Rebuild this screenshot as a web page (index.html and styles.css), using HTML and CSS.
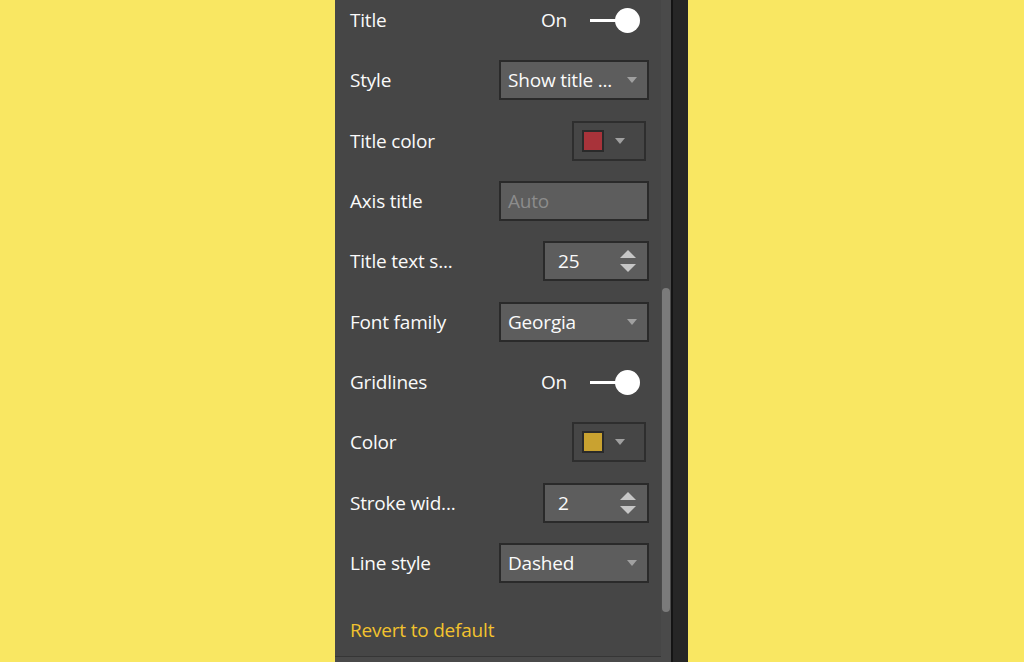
FILE: index.html
```html
<!DOCTYPE html>
<html>
<head>
<meta charset="utf-8">
<link rel="stylesheet" href="styles.css">
</head>
<body>
<div class="panel">
  <div class="content">
    <div class="rows">
      <div class="row">
        <span class="label">Title</span>
        <div class="toggle"><span class="state">On</span><span class="switch"><span class="knob"></span></span></div>
      </div>
      <div class="row">
        <span class="label">Style</span>
        <div class="select"><span class="value">Show title ...</span><span class="caret"></span></div>
      </div>
      <div class="row">
        <span class="label">Title color</span>
        <div class="color"><span class="swatch swatch-red"></span><span class="caret"></span></div>
      </div>
      <div class="row">
        <span class="label">Axis title</span>
        <div class="input"><span class="placeholder">Auto</span></div>
      </div>
      <div class="row">
        <span class="label">Title text s...</span>
        <div class="spin"><span class="value">25</span><span class="arrows"><span class="up"></span><span class="down"></span></span></div>
      </div>
      <div class="row">
        <span class="label">Font family</span>
        <div class="select"><span class="value">Georgia</span><span class="caret"></span></div>
      </div>
      <div class="row">
        <span class="label">Gridlines</span>
        <div class="toggle"><span class="state">On</span><span class="switch"><span class="knob"></span></span></div>
      </div>
      <div class="row">
        <span class="label">Color</span>
        <div class="color"><span class="swatch swatch-gold"></span><span class="caret"></span></div>
      </div>
      <div class="row">
        <span class="label">Stroke wid...</span>
        <div class="spin"><span class="value">2</span><span class="arrows"><span class="up"></span><span class="down"></span></span></div>
      </div>
      <div class="row">
        <span class="label">Line style</span>
        <div class="select"><span class="value">Dashed</span><span class="caret"></span></div>
      </div>
    </div>
    <div class="revert">Revert to default</div>
    <div class="footer"></div>
  </div>
  <div class="track"><div class="thumb"></div></div>
  <div class="divider"></div>
  <div class="edge"></div>
</div>
</body>
</html>
```

FILE: styles.css
```css
html, body {
  margin: 0;
  padding: 0;
  height: 100%;
}
body {
  background: #f9e762;
  font-family: "Open Sans", "Noto Sans", sans-serif;
  overflow: hidden;
}
.panel {
  display: flex;
  height: 662px;
  width: 353px;
  margin-left: 335px;
  background: #464646;
}
.content {
  box-sizing: border-box;
  flex: 0 0 326px;
  width: 326px;
  padding: 0 12px 0 15px;
  display: flex;
  flex-direction: column;
  overflow: hidden;
}
.rows {
  margin-top: -10px;
  display: flex;
  flex-direction: column;
}
.row {
  height: 60.33px;
  display: flex;
  align-items: center;
  justify-content: space-between;
}
.label, .state, .value, .placeholder, .revert {
  font-size: 19px;
  letter-spacing: -0.2px;
}
.label, .state, .value {
  color: #fafafa;
}
.toggle {
  display: flex;
  align-items: center;
  margin-right: 9px;
}
.state {
  margin-right: 23px;
}
.switch {
  width: 50px;
  height: 25px;
  display: flex;
  align-items: center;
  justify-content: flex-end;
  background: linear-gradient(#fff, #fff) left center / 30px 3px no-repeat;
}
.knob {
  width: 25px;
  height: 25px;
  border-radius: 50%;
  background: #ffffff;
}
.select, .input, .spin {
  box-sizing: border-box;
  height: 40px;
  border: 2px solid #2a2a2a;
  background: #5d5d5d;
  display: flex;
  align-items: center;
}
.select, .input {
  width: 150px;
  padding: 0 10px 0 7px;
}
.select {
  justify-content: space-between;
}
.placeholder {
  color: #8c8c8c;
}
.caret {
  width: 0;
  height: 0;
  border-left: 5px solid transparent;
  border-right: 5px solid transparent;
  border-top: 6px solid #a0a0a0;
}
.color {
  box-sizing: border-box;
  width: 74px;
  height: 40px;
  margin-right: 3px;
  border: 2px solid #2e2e2e;
  display: flex;
  align-items: center;
  padding-left: 8px;
  gap: 11px;
}
.swatch {
  box-sizing: border-box;
  width: 22px;
  height: 22px;
  border: 2px solid #2a2a2a;
}
.swatch-red { background: #a8333a; }
.swatch-gold { background: #c9a230; }
.spin {
  width: 106px;
  padding: 0 11px 0 13px;
  justify-content: space-between;
}
.arrows {
  display: flex;
  flex-direction: column;
  gap: 6px;
}
.up, .down {
  width: 0;
  height: 0;
  border-left: 8px solid transparent;
  border-right: 8px solid transparent;
}
.up { border-bottom: 8px solid #c6c6c6; }
.down { border-top: 8px solid #c6c6c6; }
.revert {
  margin-top: 24px;
  color: #f2c22e;
}
.footer {
  margin-top: auto;
  margin-left: -15px;
  margin-right: -12px;
  height: 5px;
  border-top: 1px solid #363636;
  background: #4a4a4a;
}
.track {
  flex: 0 0 10px;
  background: #4a4a4a;
  padding-top: 288px;
}
.thumb {
  width: 8px;
  height: 324px;
  margin-left: 1px;
  border-radius: 4px;
  background: #7b7b7b;
}
.divider {
  flex: 0 0 2px;
  background: #141414;
}
.edge {
  flex: 0 0 15px;
  background: #262626;
}
```
